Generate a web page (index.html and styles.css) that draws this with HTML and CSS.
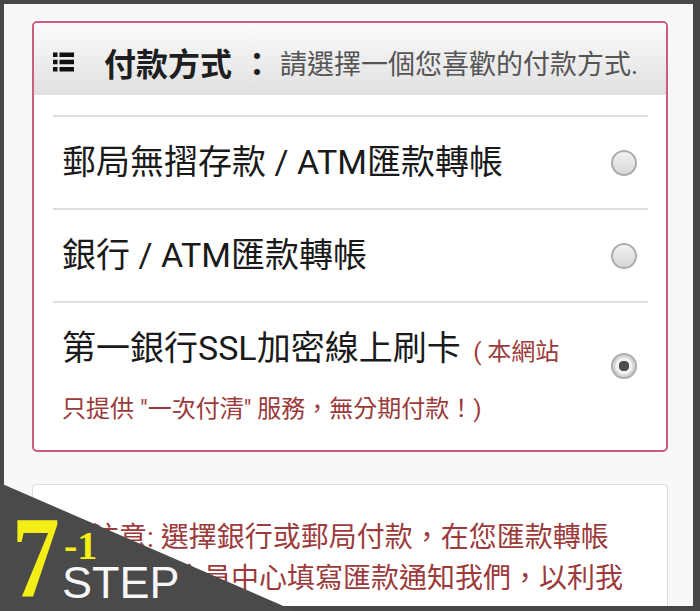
FILE: index.html
```html
<!DOCTYPE html>
<html lang="zh-Hant">
<head>
<meta charset="utf-8">
<title>付款方式</title>
<link rel="stylesheet" href="styles.css">
</head>
<body>
<div class="frame">
  <div class="page">
    <section class="card card--pay">
      <header class="card-head">
        <svg class="list-icon" viewBox="0 0 21 20" aria-hidden="true">
          <rect x="0" y="0.5" width="4.5" height="4.5" fill="#111"/>
          <rect x="6.5" y="0.5" width="14.5" height="4.5" fill="#111"/>
          <rect x="0" y="7.75" width="4.5" height="4.5" fill="#111"/>
          <rect x="6.5" y="7.75" width="14.5" height="4.5" fill="#111"/>
          <rect x="0" y="15" width="4.5" height="4.5" fill="#111"/>
          <rect x="6.5" y="15" width="14.5" height="4.5" fill="#111"/>
        </svg>
        <span class="head-title">付款方式</span>
        <span class="head-colon">：</span>
        <span class="head-sub">請選擇一個您喜歡的付款方式.</span>
      </header>
      <ul class="options">
        <li class="option">
          <span class="option-label">郵局無摺存款 / ATM匯款轉帳</span>
          <span class="radio"></span>
        </li>
        <li class="option">
          <span class="option-label">銀行 / ATM匯款轉帳</span>
          <span class="radio"></span>
        </li>
        <li class="option option--last">
          <span class="option-label">第一銀行SSL加密線上刷卡 <span class="note">( 本網站只提供 "一次付清" 服務，無分期付款！)</span></span>
          <span class="radio radio--checked"></span>
        </li>
      </ul>
    </section>
    <section class="card card--notice">
      <p class="notice-text">請注意: 選擇銀行或郵局付款，在您匯款轉帳後，請至會員中心填寫匯款通知我們，以利我們盡快為您處理訂單。</p>
    </section>
  </div>
  <div class="step">
    <div class="step-bg"></div>
    <span class="step-num">7</span>
    <span class="step-sub">-1</span>
    <span class="step-word">STEP</span>
  </div>
</div>
</body>
</html>
```
FILE: styles.css
```css
body {
  margin: 0;
}

.frame {
  position: relative;
  width: 700px;
  height: 611px;
  box-sizing: border-box;
  padding: 4px 7px 5px 4px;
  background: #474747;
  overflow: hidden;
  font-family: Roboto, "Noto Sans CJK TC", sans-serif;
}

.page {
  height: 100%;
  box-sizing: border-box;
  padding: 17px 25px 0 28px;
  background: #f8f8f8;
  overflow: hidden;
}

.card {
  background: #fff;
}

.card--pay {
  border: 2px solid #cf5b7b;
  border-radius: 5px;
  overflow: hidden;
}

.card-head {
  display: flex;
  align-items: center;
  height: 72px;
  box-sizing: border-box;
  padding: 6px 0 0 19px;
  background: linear-gradient(#fbfbfb, #e0e0e0);
}

.list-icon {
  width: 21px;
  height: 20px;
  margin-right: 30px;
  flex: none;
}

.head-title {
  font-size: 32px;
  font-weight: 700;
  color: #1e1e1e;
}

.head-colon {
  font-size: 32px;
  font-weight: 700;
  color: #222;
  margin-left: 9px;
}

.head-sub {
  font-size: 27px;
  color: #555;
  margin-left: 7px;
}

.options {
  list-style: none;
  margin: 20px 18px 0 19px;
  padding: 0;
}

.option {
  display: flex;
  align-items: center;
  border-top: 2px solid #dedede;
  padding: 17px 11px 17px 9px;
}

.option--last {
  padding-bottom: 16px;
}

.option-label {
  flex: 1;
  font-size: 34px;
  line-height: 57px;
  color: #1a1a1a;
}

.note {
  margin-left: 4px;
  font-size: 24px;
  line-height: 1;
  color: #9b3b3b;
}

.radio {
  flex: none;
  width: 26px;
  height: 26px;
  box-sizing: border-box;
  margin-left: 38px;
  border: 2px solid #adadad;
  border-radius: 50%;
  background: linear-gradient(#f1f1f1, #d7d7d7);
}

.radio--checked {
  align-self: flex-start;
  margin-top: 33px;
  background: radial-gradient(circle, #4d4d4d 0 5px, #f3f3f3 5.5px 8px, #d6d6d6 9px);
}

.card--notice {
  height: 200px;
  margin-top: 32px;
  box-sizing: border-box;
  padding: 32px 37px 0 30px;
  border: 1px solid #dcdcdc;
  border-radius: 4px;
}

.notice-text {
  margin: 0;
  font-size: 28px;
  line-height: 41px;
  color: #9c3b3b;
}

.step {
  position: absolute;
  left: 0;
  bottom: 0;
  width: 295px;
  height: 128px;
}

.step-bg {
  position: absolute;
  inset: 0;
  background: #4a4a4a;
  clip-path: polygon(0 0, 100% 100%, 0 100%);
}

.step-num {
  position: absolute;
  left: 12px;
  top: 17px;
  font-family: "Liberation Serif", serif;
  font-weight: 700;
  font-size: 116px;
  line-height: 1;
  color: #f3ee16;
  transform: scaleX(0.82);
  transform-origin: left top;
}

.step-sub {
  position: absolute;
  left: 64px;
  top: 43px;
  font-family: "Liberation Serif", serif;
  font-weight: 700;
  font-size: 40px;
  line-height: 1;
  color: #f3ee16;
}

.step-word {
  position: absolute;
  left: 62px;
  top: 77px;
  font-family: "Liberation Sans", sans-serif;
  font-size: 45px;
  line-height: 1;
  color: #f7f7f7;
}
```
